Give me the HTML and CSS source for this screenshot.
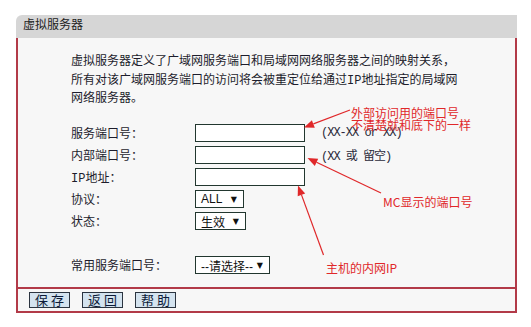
FILE: index.html
```html
<!DOCTYPE html>
<html lang="zh-CN">
  <head>
    <meta charset="UTF-8" />
    <title>虚拟服务器</title>
    <link rel="stylesheet" href="styles.css">
  </head>
  <body>
    <div class="page">
      <div class="panel">
        <div class="panel-title">虚拟服务器</div>
        <div class="panel-body">
          <p class="intro">虚拟服务器定义了广域网服务端口和局域网网络服务器之间的映射关系，<br>所有对该广域网服务端口的访问将会被重定位给通过IP地址指定的局域网<br>网络服务器。</p>
          <div class="form">
            <label>服务端口号：</label>
            <div class="field"><input type="text"><span class="hint">(XX-XX or XX)</span></div>
            <label>内部端口号：</label>
            <div class="field"><input type="text"><span class="hint">(XX 或 留空)</span></div>
            <label>IP地址：</label>
            <div class="field"><input type="text"></div>
            <label>协议：</label>
            <div class="field"><div class="select select-sm"><span>ALL</span><span class="arrow">▼</span></div></div>
            <label>状态：</label>
            <div class="field"><div class="select select-md"><span>生效</span><span class="arrow">▼</span></div></div>
            <div class="blank"></div>
            <label>常用服务端口号：</label>
            <div class="field"><div class="select select-lg"><span>--请选择--</span><span class="arrow">▼</span></div></div>
          </div>
        </div>
        <div class="panel-foot">
          <button>保 存</button>
          <button>返 回</button>
          <button>帮 助</button>
        </div>
      </div>

      <!-- 标注 -->
      <div class="notes">
        <svg width="531" height="327" viewBox="0 0 531 327">
          <g stroke="#e0282a" stroke-width="1.2" fill="#e0282a">
            <line x1="350" y1="110" x2="313.4" y2="123.9" />
            <polygon points="304,127.5 311.9,120.2 314.8,127.7" stroke="none" />
            <line x1="381" y1="193" x2="316.5" y2="162.3" />
            <polygon points="307.5,158 318.2,158.7 314.8,165.9" stroke="none" />
            <line x1="323.5" y1="255" x2="301.5" y2="194.9" />
            <polygon points="298,185.5 305.2,193.5 297.7,196.3" stroke="none" />
          </g>
        </svg>
        <span class="note note-outer">外部访问用的端口号<br>不清楚就和底下的一样</span>
        <span class="note note-mc">MC显示的端口号</span>
        <span class="note note-ip">主机的内网IP</span>
      </div>
    </div>
  </body>
</html>
```

FILE: styles.css
```css
* {
  margin: 0;
  padding: 0;
}
body {
  background: #fff;
  font-family: "Liberation Mono", "Noto Sans CJK SC", monospace;
  font-size: 12px;
  color: #1d1d2c;
}
.page {
  position: relative;
  width: 531px;
  height: 327px;
  overflow: hidden;
}
.panel {
  margin: 15px 0 0 16px;
  width: 501px;
}
.panel-title {
  height: 23px;
  line-height: 23px;
  padding-left: 7px;
  background: #d6d6d6;
  border-top-left-radius: 6px;
  color: #222;
}
.panel-body {
  background: #f7f7f7;
  border-left: 2px solid #b23a48;
  border-right: 2px solid #b23a48;
  padding: 15px 0 11px 53px;
}
.intro {
  line-height: 18.5px;
  margin-bottom: 13.5px;
}
.form {
  display: grid;
  grid-template-columns: 124px 1fr;
  grid-auto-rows: 22px;
  align-items: center;
}
.blank {
  grid-column: 1 / -1;
}
.field {
  display: flex;
  align-items: center;
}
.field input {
  width: 110px;
  height: 18px;
  box-sizing: border-box;
  border: 1px solid #22372f;
  background: #fff;
  outline: none;
}
.hint {
  margin-left: 16px;
  letter-spacing: -1px;
  color: #2a2a3a;
}
.select {
  display: flex;
  justify-content: space-between;
  align-items: center;
  height: 18px;
  box-sizing: border-box;
  border: 1px solid #22372f;
  background: #fff;
  padding: 0 6px 0 5px;
  font-family: "Liberation Sans", "Noto Sans CJK SC", sans-serif;
  font-size: 12px;
  color: #111;
}
.select-sm {
  width: 49px;
}
.select-md {
  width: 51px;
}
.select-lg {
  width: 75px;
}
.select .arrow {
  font-family: "DejaVu Sans", sans-serif;
  font-size: 8px;
}
.panel-foot {
  display: flex;
  gap: 12px;
  background: #f7f7f7;
  border: 2px solid #b23a48;
  padding: 3px 0 3px 11px;
}
.panel-foot button {
  width: 41px;
  height: 16px;
  border: 1px solid #2b3440;
  background: #d4e3ef;
  color: #0d1b38;
  font-family: "Noto Sans CJK SC", sans-serif;
  font-size: 13px;
  line-height: 14px;
}
/* 标注层 */
.notes {
  position: absolute;
  left: 0;
  top: 0;
  width: 531px;
  height: 327px;
  pointer-events: none;
}
.notes svg {
  position: absolute;
  left: 0;
  top: 0;
}
.note {
  position: absolute;
  color: #e0282a;
  font-family: "Noto Sans CJK SC", sans-serif;
  font-size: 12px;
  line-height: 12px;
  white-space: nowrap;
}
.note-outer {
  left: 351px;
  top: 107px;
  line-height: 11.5px;
}
.note-mc {
  left: 383px;
  top: 196px;
}
.note-ip {
  left: 326px;
  top: 262px;
}
```
